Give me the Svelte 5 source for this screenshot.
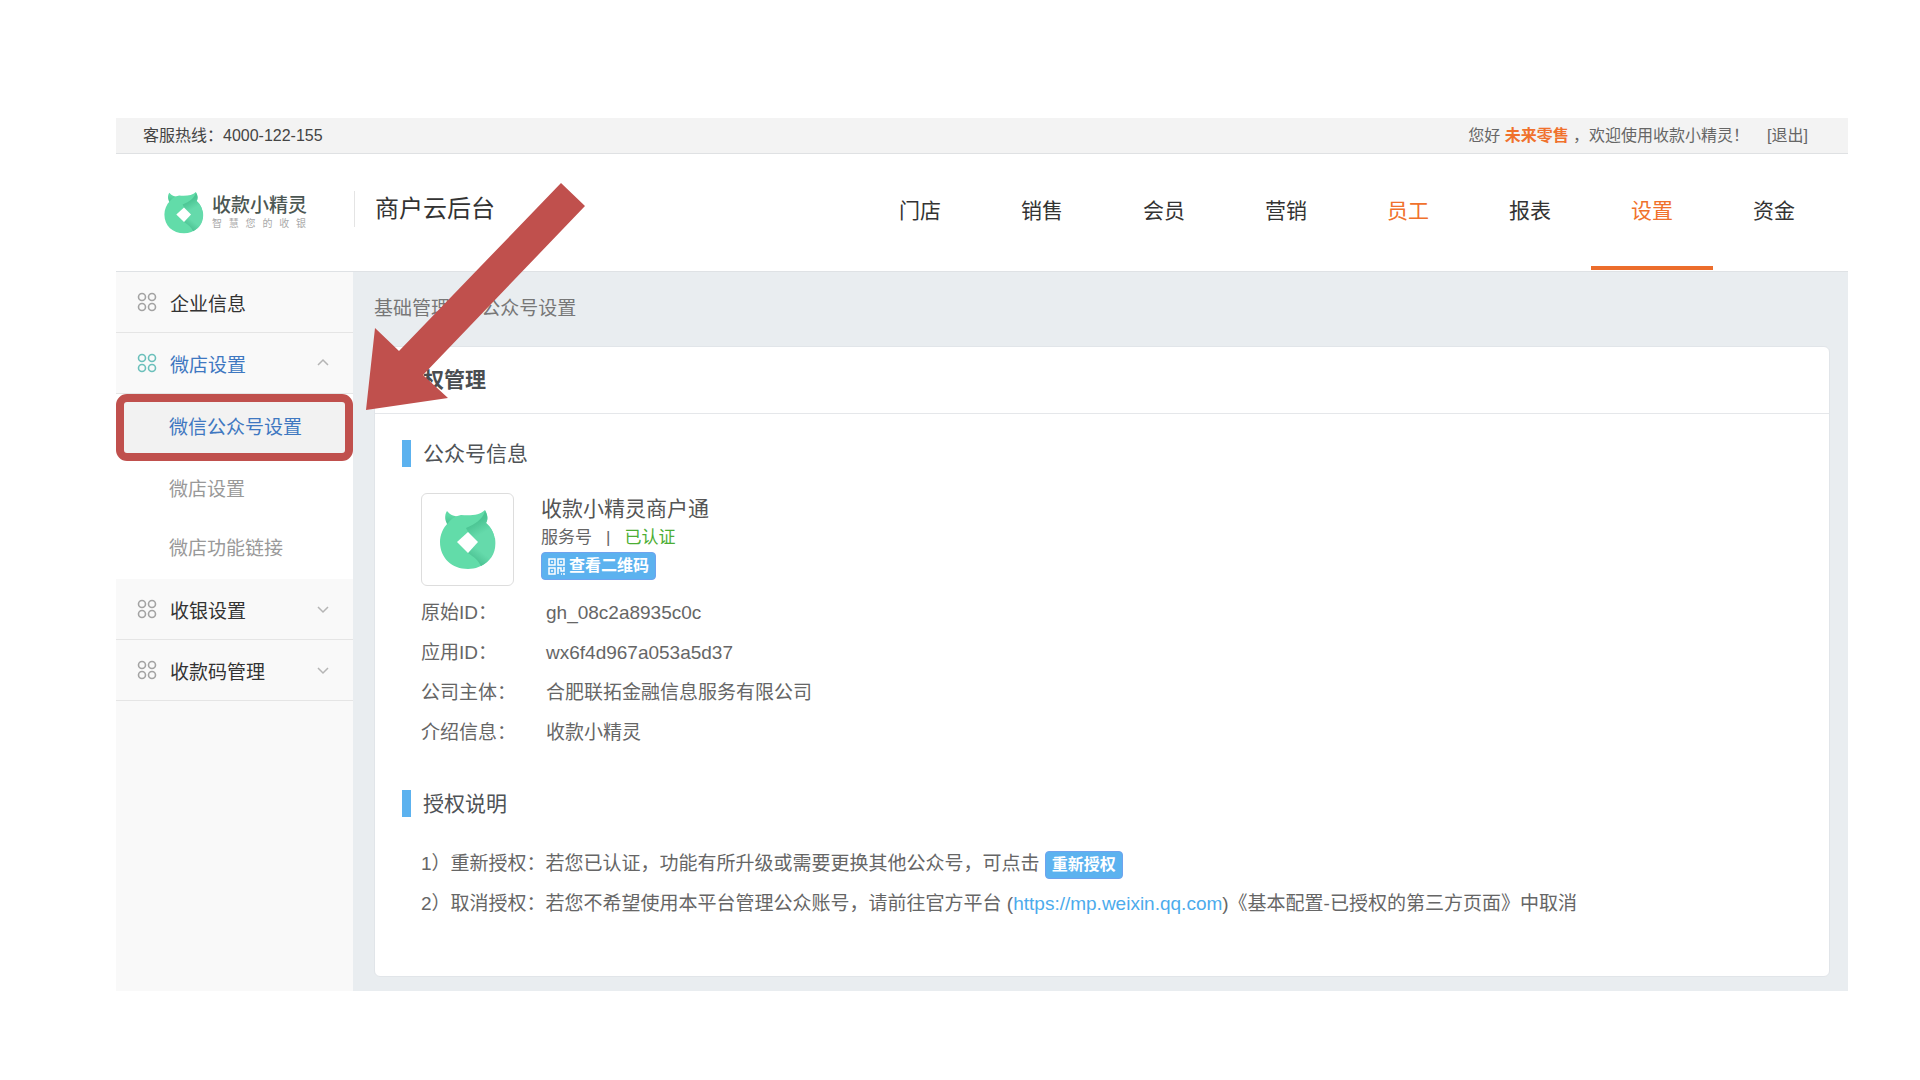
<script lang="ts">
	type NavItem = { label: string; accent?: boolean; current?: boolean };
	type MenuItem = { label: string; children?: string[] };

	const navItems: NavItem[] = [
		{ label: '门店' },
		{ label: '销售' },
		{ label: '会员' },
		{ label: '营销' },
		{ label: '员工', accent: true },
		{ label: '报表' },
		{ label: '设置', accent: true, current: true },
		{ label: '资金' }
	];

	const menuItems: MenuItem[] = [
		{ label: '企业信息' },
		{ label: '微店设置', children: ['微信公众号设置', '微店设置', '微店功能链接'] },
		{ label: '收银设置', children: [] },
		{ label: '收款码管理', children: [] }
	];

	const details = [
		{ term: '原始ID：', value: 'gh_08c2a8935c0c' },
		{ term: '应用ID：', value: 'wx6f4d967a053a5d37' },
		{ term: '公司主体：', value: '合肥联拓金融信息服务有限公司' },
		{ term: '介绍信息：', value: '收款小精灵' }
	];

	let currentChild = $state('微信公众号设置');
	let expanded = $state<Record<string, boolean>>({ 微店设置: true });
</script>

{#snippet catLogo(id: string)}
	<svg class="cat-logo" viewBox="0 0 56 60" aria-hidden="true">
		<defs>
			<linearGradient id="{id}-ear" x1="0" y1="0" x2="0" y2="1">
				<stop offset="0.3" stop-color="#5fdaa6" />
				<stop offset="1" stop-color="#48bf8e" />
			</linearGradient>
			<linearGradient id="{id}-fold" gradientUnits="userSpaceOnUse" x1="37" y1="12" x2="43" y2="23">
				<stop offset="0" stop-color="#4cc594" />
				<stop offset="1" stop-color="#65daab" />
			</linearGradient>
			<linearGradient id="{id}-tail" gradientUnits="userSpaceOnUse" x1="36" y1="52" x2="43" y2="43">
				<stop offset="0" stop-color="#4cc293" />
				<stop offset="1" stop-color="#65daab" />
			</linearGradient>
		</defs>
		<path fill="url(#{id}-ear)" d="M7 1C4 5 5 12 8 15L20 7C14 6 10 5 7 1Z" />
		<path
			fill="#62dca9"
			d="M8 13C12 8 16 6 21 5C31 6 40 5 45 0C48 5 48 10 46 13C52 18 55 25 55 32C55 48 43 59 28 59C12 59 0 48 0 32C0 25 3 18 8 13Z"
		/>
		<!-- Right half of the ribbon, shaded where the upper fold covers it -->
		<path
			fill="url(#{id}-fold)"
			d="M45 1C42 10 35 14 26 18L28 22L38 32L46 45L54 38C57 28 52 18 46 13C48 10 48 5 45 1Z"
		/>
		<path
			fill="url(#{id}-tail)"
			d="M28 43L38 32L55 28C57 42 51 51 41 56C38 50 34 47 28 43Z"
		/>
		<path fill="#ffffff" d="M28 22L38 32L28 43L17 32Z" />
	</svg>
{/snippet}

<div class="page">
	<div class="topbar">
		<span class="hotline">客服热线：4000-122-155</span>
		<p class="greeting">您好 <strong>未来零售</strong> ，欢迎使用收款小精灵！</p>
		<a class="logout" href="#logout">[退出]</a>
	</div>

	<header class="header">
		<a class="brand" href="#home">
			{@render catLogo('brand')}
			<span class="brand-text">
				<span class="brand-name">收款小精灵</span>
				<span class="brand-slogan"><i>智</i><i>慧</i><i>您</i><i>的</i><i>收</i><i>银</i></span>
			</span>
		</a>
		<span class="product">商户云后台</span>
		<nav class="nav" aria-label="主导航">
			{#each navItems as item (item.label)}
				<a
					href="#{item.label}"
					class="nav-link"
					class:accent={item.accent}
					class:current={item.current}
					aria-current={item.current ? 'page' : undefined}>{item.label}</a
				>
			{/each}
		</nav>
	</header>

	<div class="body">
		<aside class="sidebar">
			{#each menuItems as item (item.label)}
				{@const open = !!expanded[item.label]}
				<button
					type="button"
					class="menu-item"
					class:open
					aria-expanded={item.children ? open : undefined}
					onclick={() => (expanded[item.label] = !open)}
				>
					<svg class="menu-icon" viewBox="0 0 20 20" aria-hidden="true">
						<circle cx="5" cy="5" r="3.5" />
						<circle cx="15" cy="5" r="3.5" />
						<circle cx="5" cy="15" r="3.5" />
						<circle cx="15" cy="15" r="3.5" />
					</svg>
					<span class="menu-label">{item.label}</span>
					{#if item.children}
						<svg class="menu-chevron" viewBox="0 0 12 12" aria-hidden="true">
							<path d="M1 4L6 9L11 4" />
						</svg>
					{/if}
				</button>
				{#if open && item.children?.length}
					<ul class="submenu">
						{#each item.children as child (child)}
							<li>
								<a
									href="#{child}"
									class="submenu-link"
									class:current={child === currentChild}
									onclick={() => (currentChild = child)}>{child}</a
								>
							</li>
						{/each}
					</ul>
				{/if}
			{/each}
		</aside>

		<main class="main">
			<p class="breadcrumb">基础管理<span class="separator">&gt;</span>公众号设置</p>
			<section class="card">
				<h1 class="card-title">授权管理</h1>

				<h2 class="section-title">公众号信息</h2>
				<div class="account">
					<div class="avatar">{@render catLogo('avatar')}</div>
					<div class="account-info">
						<span class="account-name">收款小精灵商户通</span>
						<span class="account-type">服务号<span class="bar">|</span><em>已认证</em></span>
						<button type="button" class="btn">
							<svg class="qr" viewBox="0 0 17 17" aria-hidden="true">
								<path d="M1 1h6v6H1zM10 1h6v6h-6zM1 10h6v6H1zM4 3v2M13 3v2M4 12v2" />
								<path d="M10 9v7M10 10h3v3h3v-4M13 16h1M16 15v2" />
							</svg>
							查看二维码
						</button>
					</div>
				</div>
				<dl class="details">
					{#each details as row (row.term)}
						<dt>{row.term}</dt>
						<dd>{row.value}</dd>
					{/each}
				</dl>

				<h2 class="section-title">授权说明</h2>
				<ol class="notes">
					<li>
						1）重新授权：若您已认证，功能有所升级或需要更换其他公众号，可点击
						<button type="button" class="btn btn-inline">重新授权</button>
					</li>
					<li>
						2）取消授权：若您不希望使用本平台管理公众账号，请前往官方平台
						(<a href="https://mp.weixin.qq.com">https://mp.weixin.qq.com</a>)《基本配置-已授权的第三方页面》中取消
					</li>
				</ol>
			</section>
		</main>
	</div>

	<!-- Pointer over the page, aimed at the highlighted submenu entry -->
	<svg class="arrow" viewBox="0 0 220 228" aria-hidden="true">
		<path d="M0 227L9 145L33 168L195 0L219 23L57 192L82 215Z" />
	</svg>
</div>

<style>
	:global(body) {
		background: #ffffff;
	}

	.page {
		position: relative;
		margin: 118px 72px 90px 116px;
		font-family: 'Liberation Sans', 'Noto Sans CJK SC', sans-serif;
		font-size: 19px;
		color: #666666;
	}

	.page a {
		text-decoration: none;
	}

	.topbar {
		display: flex;
		align-items: center;
		box-sizing: border-box;
		height: 36px;
		padding: 0 40px 3px 27px;
		background: #f3f3f3;
		border-bottom: 1px solid #dfe1e3;
		font-size: 16px;
	}

	.hotline {
		color: #444444;
	}

	.greeting {
		margin: 0 18px 0 auto;
	}

	.greeting strong {
		color: #f0712c;
	}

	.logout {
		color: #666666;
	}

	.header {
		display: flex;
		align-items: stretch;
		height: 117px;
		border-bottom: 1px solid #dfe2e5;
	}

	.brand {
		display: flex;
		align-items: center;
		gap: 8px;
		width: 190px;
		padding-left: 48px;
	}

	.brand .cat-logo {
		width: 40px;
		height: 42px;
	}

	.brand-text {
		display: flex;
		flex-direction: column;
		width: 94px;
	}

	.brand-name {
		font-size: 19px;
		font-weight: 500;
		line-height: 22px;
		white-space: nowrap;
		color: #4c5753;
	}

	.brand-slogan {
		display: flex;
		justify-content: space-between;
		font-size: 10px;
		line-height: 14px;
		color: #aaaaaa;
	}

	.brand-slogan i {
		font-style: normal;
	}

	.product {
		align-self: center;
		margin-bottom: 8px;
		padding-left: 20px;
		border-left: 1px solid #e4e4e4;
		font-size: 24px;
		line-height: 36px;
		color: #333333;
	}

	.nav {
		display: flex;
		margin: 0 13px 1px auto;
	}

	.nav-link {
		display: flex;
		align-items: center;
		justify-content: center;
		box-sizing: border-box;
		width: 122px;
		padding-bottom: 2px;
		border-bottom: 4px solid transparent;
		font-size: 21px;
		color: #333333;
	}

	.nav-link.accent {
		color: #f0712c;
	}

	.nav-link.current {
		border-bottom-color: #ec6d2c;
	}

	.body {
		display: flex;
		background: #e9edf0;
	}

	.sidebar {
		flex: none;
		width: 237px;
		background: #f9f9f9;
	}

	.menu-item {
		display: flex;
		align-items: center;
		width: 100%;
		height: 61px;
		padding: 0 24px 0 21px;
		background: none;
		border: 0;
		border-bottom: 1px solid #e5e5e5;
		font: inherit;
		text-align: left;
		color: #333333;
		cursor: pointer;
	}

	.menu-item.open {
		color: #3f78c1;
	}

	.menu-icon {
		width: 20px;
		height: 20px;
		margin-right: 13px;
		fill: none;
		stroke: #a3a3a3;
		stroke-width: 1.6;
	}

	.open .menu-icon {
		stroke: #6bc0bb;
	}

	.menu-label {
		flex: 1;
	}

	.menu-chevron {
		width: 12px;
		height: 12px;
		fill: none;
		stroke: #b5b5b5;
		stroke-width: 1.5;
	}

	.open .menu-chevron {
		transform: rotate(180deg);
	}

	.submenu {
		margin: 0;
		padding: 0;
		list-style: none;
		background: #ffffff;
	}

	.submenu-link {
		display: block;
		box-sizing: border-box;
		height: 59px;
		padding-left: 53px;
		line-height: 57px;
		color: #999999;
	}

	.submenu-link.current {
		height: 67px;
		padding-left: 45px;
		line-height: 51px;
		background: #f2f2f2;
		border: 8px solid #c0504d;
		border-radius: 11px;
		color: #3f78c1;
	}

	.main {
		flex: 1;
		min-width: 0;
		padding: 0 18px 14px 21px;
	}

	.breadcrumb {
		margin: 0;
		line-height: 74px;
		color: #777777;
	}

	.separator {
		margin: 0 10px;
	}

	.card {
		padding-bottom: 52px;
		background: #ffffff;
		border: 1px solid #e1e5e9;
		border-radius: 6px;
	}

	.card-title {
		margin: 0 0 26px;
		padding-left: 27px;
		border-bottom: 1px solid #e5e7ea;
		font-size: 21px;
		line-height: 66px;
		color: #4a4d50;
	}

	.section-title {
		margin: 0 0 0 27px;
		padding-left: 12px;
		border-left: 9px solid #5cb2ef;
		font-size: 21px;
		font-weight: 400;
		line-height: 27px;
		color: #4f5357;
	}

	.account {
		display: flex;
		gap: 27px;
		margin: 26px 0 7px 46px;
	}

	.avatar {
		display: flex;
		align-items: center;
		justify-content: center;
		width: 91px;
		height: 91px;
		border: 1px solid #dddddd;
		border-radius: 6px;
	}

	.avatar .cat-logo {
		width: 56px;
		height: 60px;
	}

	.account-info {
		display: flex;
		flex-direction: column;
		align-items: flex-start;
	}

	.account-name {
		font-size: 21px;
		line-height: 31px;
		color: #555555;
	}

	.account-type {
		font-size: 17px;
		line-height: 28px;
	}

	.account-type .bar {
		margin: 0 14px;
	}

	.account-type em {
		font-style: normal;
		color: #4cae34;
	}

	.btn {
		display: inline-flex;
		align-items: center;
		gap: 4px;
		height: 28px;
		padding: 0 6px;
		background: #5cb2ef;
		border: 1px solid #6ea3ee;
		border-radius: 4px;
		font: inherit;
		font-size: 16px;
		font-weight: 700;
		line-height: 24px;
		color: #ffffff;
		cursor: pointer;
	}

	.btn-inline {
		vertical-align: middle;
	}

	.qr {
		width: 17px;
		height: 17px;
		fill: none;
		stroke: currentColor;
		stroke-width: 1.5;
	}

	.details {
		display: grid;
		grid-template-columns: 125px 1fr;
		margin: 0 0 37px 46px;
		line-height: 40px;
	}

	.details dt,
	.details dd {
		margin: 0;
	}

	.notes {
		margin: 27px 0 0;
		padding: 0 0 0 46px;
		list-style: none;
		line-height: 40px;
	}

	.notes a {
		color: #4cabec;
	}

	.arrow {
		position: absolute;
		top: 65px;
		left: 250px;
		width: 220px;
		height: 228px;
		fill: #c0504d;
		pointer-events: none;
	}
</style>
